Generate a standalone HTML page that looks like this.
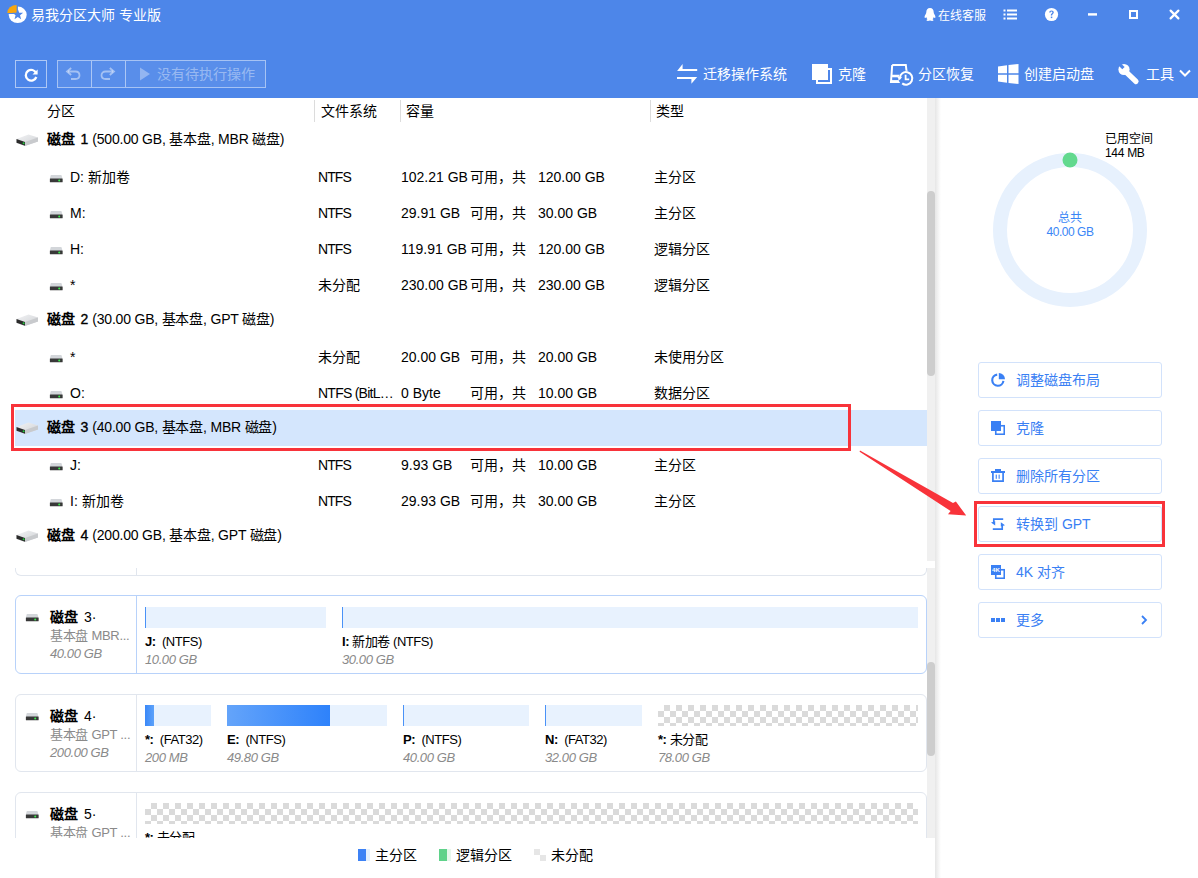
<!DOCTYPE html>
<html lang="zh-CN"><head><meta charset="utf-8">
<style>
*{margin:0;padding:0;box-sizing:border-box}
html,body{width:1198px;height:878px;overflow:hidden;background:#fff;font-family:"Liberation Sans",sans-serif;color:#000}
.a{position:absolute;white-space:nowrap}
.b{font-weight:bold}
.i{font-style:italic}
</style></head><body>
<div class="a" style="left:0;top:0;width:1198px;height:98px;background:#4d86e9"></div>

<svg class="a" style="left:0;top:0" width="30" height="30" viewBox="0 0 30 30">
<ellipse cx="17.7" cy="14.8" rx="9" ry="8.3" fill="#fff"/>
<rect x="8" y="5" width="9.9" height="9" fill="#4d86e9"/>
<path d="M16.6,12.9 L7.3,12.9 A9.3,7.9 0 0 1 16.6,5 Z" fill="#f9a70f"/>
<polygon points="17.80,9.00 19.18,12.70 23.13,12.87 20.03,15.33 21.09,19.13 17.80,16.95 14.51,19.13 15.57,15.33 12.47,12.87 16.42,12.70" fill="#4d86e9"/>
</svg>
<div class="a" style="left:31px;top:6px;font-size:14px;line-height:18px;color:#fff;">易我分区大师 专业版</div>
<svg class="a" style="left:923px;top:7px" width="14" height="15" viewBox="0 0 14 15">
<path d="M7,1 C4.5,1 3.3,3 3.3,5.2 C3.3,6 3.1,6.6 2.5,7.6 C1.6,9 1.2,10.6 2,11 C2.4,11.2 2.8,10.6 3.2,10 C3.4,11 3.9,11.8 4.5,12.3 C3.6,12.7 3.3,13.2 3.6,13.6 C4,14.1 6,14 7,13.5 C8,14 10,14.1 10.4,13.6 C10.7,13.2 10.4,12.7 9.5,12.3 C10.1,11.8 10.6,11 10.8,10 C11.2,10.6 11.6,11.2 12,11 C12.8,10.6 12.4,9 11.5,7.6 C10.9,6.6 10.7,6 10.7,5.2 C10.7,3 9.5,1 7,1 Z" fill="#fff"/>
</svg>
<div class="a" style="left:938px;top:8px;font-size:12px;line-height:16px;color:#fff;">在线客服</div>
<svg class="a" style="left:1003px;top:9px" width="15" height="11" viewBox="0 0 15 11">
<rect x="0.5" y="0.5" width="2" height="2" fill="#fff"/><rect x="4" y="0.5" width="10" height="2" fill="#fff"/>
<rect x="0.5" y="4.5" width="2" height="2" fill="#fff"/><rect x="4" y="4.5" width="10" height="2" fill="#fff"/>
<rect x="0.5" y="8.5" width="2" height="2" fill="#fff"/><rect x="4" y="8.5" width="10" height="2" fill="#fff"/>
</svg>
<svg class="a" style="left:1044px;top:7px" width="15" height="15" viewBox="0 0 15 15">
<circle cx="7.5" cy="7.5" r="6.6" fill="#fff"/>
<path d="M5.2,5.6 C5.2,4.2 6.2,3.4 7.5,3.4 C8.9,3.4 9.8,4.3 9.8,5.4 C9.8,6.6 8.4,6.9 8.2,8 L8.2,8.6 L6.8,8.6 L6.8,7.8 C7,6.4 8.4,6.2 8.4,5.4 C8.4,4.9 8,4.6 7.5,4.6 C6.9,4.6 6.6,5 6.6,5.6 Z" fill="#4d86e9"/>
<rect x="6.8" y="9.6" width="1.5" height="1.5" fill="#4d86e9"/>
</svg>
<svg class="a" style="left:1080px;top:5px" width="20" height="20" viewBox="0 0 20 20"><rect x="8" y="8.2" width="9" height="2.4" fill="#fff"/></svg>
<div class="a" style="left:1129px;top:10px;width:9px;height:9px;border:2px solid #fff"></div>
<svg class="a" style="left:1168px;top:8px" width="13" height="13" viewBox="0 0 13 13">
<path d="M2.6,2.6 L10.4,10.4 M10.4,2.6 L2.6,10.4" stroke="#fff" stroke-width="2.2" stroke-linecap="round"/>
</svg>
<div class="a" style="left:15px;top:60px;width:32px;height:28px;border:1px solid rgba(255,255,255,0.55)"></div>
<svg class="a" style="left:23px;top:67px" width="16" height="16" viewBox="0 0 16 16">
<path d="M13.2,6.2 A5.4,5.4 0 1 0 13.3,10" stroke="#fff" stroke-width="2.3" fill="none"/>
<path d="M9.5,7.6 H14.6 V2.6 Z" fill="#fff"/>
</svg>
<div class="a" style="left:57px;top:60px;width:209px;height:28px;border:1px solid rgba(255,255,255,0.5)"></div>
<div class="a" style="left:58px;top:61px;width:207px;height:26px;background:rgba(255,255,255,0.07)"></div>
<div class="a" style="left:91px;top:61px;width:1px;height:26px;background:rgba(255,255,255,0.5)"></div>
<div class="a" style="left:125px;top:61px;width:1px;height:26px;background:rgba(255,255,255,0.5)"></div>
<svg class="a" style="left:65px;top:67px" width="17" height="14" viewBox="0 0 17 14">
<path d="M3,4.5 H10.5 C13,4.5 14.5,6.2 14.5,8.3 C14.5,10.4 13,12 10.5,12 H6" stroke="rgba(255,255,255,0.45)" stroke-width="1.8" fill="none"/>
<path d="M6.2,1 L2,4.5 L6.2,8" stroke="rgba(255,255,255,0.45)" stroke-width="1.8" fill="none"/>
</svg>
<svg class="a" style="left:99px;top:67px" width="17" height="14" viewBox="0 0 17 14">
<path d="M14,4.5 H6.5 C4,4.5 2.5,6.2 2.5,8.3 C2.5,10.4 4,12 6.5,12 H11" stroke="rgba(255,255,255,0.45)" stroke-width="1.8" fill="none"/>
<path d="M10.8,1 L15,4.5 L10.8,8" stroke="rgba(255,255,255,0.45)" stroke-width="1.8" fill="none"/>
</svg>
<svg class="a" style="left:139px;top:67px" width="12" height="14" viewBox="0 0 12 14">
<polygon points="1,0.5 11,7 1,13.5" fill="rgba(255,255,255,0.35)"/></svg>
<div class="a" style="left:157px;top:65px;font-size:14px;line-height:18px;color:rgba(255,255,255,0.4);">没有待执行操作</div>
<svg class="a" style="left:672px;top:58px" width="30" height="30" viewBox="0 0 30 30">
<polygon points="5.1,13 10.6,6 10.6,11 25.2,11 25.2,13" fill="#fff"/>
<polygon points="5,19 25.2,19 19.4,25.8 19.4,21 5,21" fill="#fff"/>
</svg>
<div class="a" style="left:703px;top:65px;font-size:14px;line-height:18px;color:#fff;">迁移操作系统</div>
<svg class="a" style="left:806px;top:58px" width="30" height="30" viewBox="0 0 30 30">
<rect x="11" y="11" width="14" height="14" stroke="#fff" stroke-width="2" fill="none"/>
<rect x="6" y="6" width="16" height="16" fill="#fff"/>
</svg>
<div class="a" style="left:838px;top:65px;font-size:14px;line-height:18px;color:#fff;">克隆</div>
<svg class="a" style="left:884px;top:58px" width="32" height="32" viewBox="0 0 32 32">
<path d="M8.2,7 H21.8 L23,17 M8.2,7 L7,24 H16 M7,17.8 H16" stroke="#fff" stroke-width="2" fill="none"/>
<rect x="7" y="18" width="8" height="6" fill="#fff"/>
<rect x="8.2" y="19.3" width="5.8" height="2.8" fill="#4d86e9"/>
<circle cx="22" cy="20.4" r="7.6" fill="#4d86e9"/>
<path d="M15.7,20.4 A6.3,6.3 0 1 1 18.2,25.4" stroke="#fff" stroke-width="2" fill="none"/>
<polygon points="13.3,18.8 18.2,18.8 15.7,22.2" fill="#fff"/>
<path d="M21.6,16.8 V21.3 H25.2" stroke="#fff" stroke-width="1.8" fill="none"/>
</svg>
<div class="a" style="left:918px;top:65px;font-size:14px;line-height:18px;color:#fff;">分区恢复</div>
<svg class="a" style="left:998px;top:64px" width="21" height="20" viewBox="0 0 21 20">
<polygon points="0,2.5 9,1.2 9,9.2 0,9.2" fill="#fff"/><polygon points="10.5,1 20.5,0 20.5,9.2 10.5,9.2" fill="#fff"/>
<polygon points="0,10.8 9,10.8 9,18.8 0,17.5" fill="#fff"/><polygon points="10.5,10.8 20.5,10.8 20.5,20 10.5,19" fill="#fff"/>
</svg>
<div class="a" style="left:1024px;top:65px;font-size:14px;line-height:18px;color:#fff;">创建启动盘</div>
<svg class="a" style="left:1116px;top:61px" width="26" height="26" viewBox="0 0 26 26">
<path d="M9,10 L20,20.5" stroke="#fff" stroke-width="5.2" stroke-linecap="round"/>
<circle cx="8" cy="8.5" r="5.6" fill="#fff"/>
<path d="M2.2,4.2 L6.3,8.3 L8.6,6 L4.5,1.9 Z" fill="#4d86e9"/>
</svg>
<div class="a" style="left:1146px;top:65px;font-size:14px;line-height:18px;color:#fff;">工具</div>
<svg class="a" style="left:1179px;top:69px" width="12" height="9" viewBox="0 0 12 9">
<path d="M1,1.5 L6,6.5 L11,1.5" stroke="#fff" stroke-width="2" fill="none"/></svg>
<div class="a" style="left:47px;top:102px;font-size:14px;line-height:18px;color:#000;">分区</div>
<div class="a" style="left:321px;top:102px;font-size:14px;line-height:18px;color:#000;">文件系统</div>
<div class="a" style="left:406px;top:102px;font-size:14px;line-height:18px;color:#000;">容量</div>
<div class="a" style="left:656px;top:102px;font-size:14px;line-height:18px;color:#000;">类型</div>
<div class="a" style="left:314px;top:100px;width:1px;height:22px;background:#dcdcdc"></div>
<div class="a" style="left:400px;top:100px;width:1px;height:22px;background:#dcdcdc"></div>
<div class="a" style="left:650px;top:100px;width:1px;height:22px;background:#dcdcdc"></div>
<div class="a" style="left:15px;top:410px;width:912px;height:36px;background:#d4e6fd"></div>
<svg class="a" style="left:16px;top:134px" width="24" height="14" viewBox="0 0 24 14">
<defs><linearGradient id="bd1" x1="0" y1="0" x2="1" y2="1"><stop offset="0" stop-color="#f2f3f5"/><stop offset="1" stop-color="#cfd1d4"/></linearGradient></defs>
<polygon points="0.5,5 12.5,0.5 22,3.5 22,7.5 8.5,12 0.5,9" fill="url(#bd1)"/>
<polygon points="0.5,5 9,8 9,11.8 0.5,8.8" fill="#2b2b2b"/>
<polygon points="9,8 22,3.5 22,7.5 9,12" fill="#c8cacd"/>
<circle cx="7.6" cy="9.2" r="1" fill="#22c93a"/>
</svg>
<div class="a" style="left:47px;top:130px;font-size:14px;line-height:18px"><span style="font-weight:900">磁盘</span><span style="margin-left:5.5px;-webkit-text-stroke:0.35px">1</span><span style="margin-left:4px;letter-spacing:-0.2px">(500.00 GB, 基本盘, MBR 磁盘)</span></div>
<svg class="a" style="left:49px;top:174px" width="14" height="9" viewBox="0 0 14 9">
<path d="M1.8,1 H12.4 L13.5,4.6 V8 H0.9 V4.6 Z" fill="#d3d6da"/>
<rect x="0.9" y="4.6" width="12.7" height="3.6" rx="0.5" fill="#383838"/>
<circle cx="10.2" cy="6.4" r="1" fill="#3cf04e"/>
</svg>
<div class="a" style="left:70px;top:168px;font-size:14px;line-height:18px;color:#000;">D: 新加卷</div>
<div class="a" style="left:318px;top:168px;font-size:14px;line-height:18px;color:#000;letter-spacing:-0.9px">NTFS</div>
<div class="a" style="left:401px;top:168px;font-size:14px;line-height:18px;color:#000;">102.21 GB</div>
<div class="a" style="left:470px;top:168px;font-size:14px;line-height:18px;color:#000;">可用，共</div>
<div class="a" style="left:538px;top:168px;font-size:14px;line-height:18px;color:#000;">120.00 GB</div>
<div class="a" style="left:654px;top:168px;font-size:14px;line-height:18px;color:#000;">主分区</div>
<svg class="a" style="left:49px;top:210px" width="14" height="9" viewBox="0 0 14 9">
<path d="M1.8,1 H12.4 L13.5,4.6 V8 H0.9 V4.6 Z" fill="#d3d6da"/>
<rect x="0.9" y="4.6" width="12.7" height="3.6" rx="0.5" fill="#383838"/>
<circle cx="10.2" cy="6.4" r="1" fill="#3cf04e"/>
</svg>
<div class="a" style="left:70px;top:204px;font-size:14px;line-height:18px;color:#000;">M:</div>
<div class="a" style="left:318px;top:204px;font-size:14px;line-height:18px;color:#000;letter-spacing:-0.9px">NTFS</div>
<div class="a" style="left:401px;top:204px;font-size:14px;line-height:18px;color:#000;">29.91 GB</div>
<div class="a" style="left:470px;top:204px;font-size:14px;line-height:18px;color:#000;">可用，共</div>
<div class="a" style="left:538px;top:204px;font-size:14px;line-height:18px;color:#000;">30.00 GB</div>
<div class="a" style="left:654px;top:204px;font-size:14px;line-height:18px;color:#000;">主分区</div>
<svg class="a" style="left:49px;top:246px" width="14" height="9" viewBox="0 0 14 9">
<path d="M1.8,1 H12.4 L13.5,4.6 V8 H0.9 V4.6 Z" fill="#d3d6da"/>
<rect x="0.9" y="4.6" width="12.7" height="3.6" rx="0.5" fill="#383838"/>
<circle cx="10.2" cy="6.4" r="1" fill="#3cf04e"/>
</svg>
<div class="a" style="left:70px;top:240px;font-size:14px;line-height:18px;color:#000;">H:</div>
<div class="a" style="left:318px;top:240px;font-size:14px;line-height:18px;color:#000;letter-spacing:-0.9px">NTFS</div>
<div class="a" style="left:401px;top:240px;font-size:14px;line-height:18px;color:#000;">119.91 GB</div>
<div class="a" style="left:470px;top:240px;font-size:14px;line-height:18px;color:#000;">可用，共</div>
<div class="a" style="left:538px;top:240px;font-size:14px;line-height:18px;color:#000;">120.00 GB</div>
<div class="a" style="left:654px;top:240px;font-size:14px;line-height:18px;color:#000;">逻辑分区</div>
<svg class="a" style="left:49px;top:282px" width="14" height="9" viewBox="0 0 14 9">
<path d="M1.8,1 H12.4 L13.5,4.6 V8 H0.9 V4.6 Z" fill="#d3d6da"/>
<rect x="0.9" y="4.6" width="12.7" height="3.6" rx="0.5" fill="#383838"/>
<circle cx="10.2" cy="6.4" r="1" fill="#3cf04e"/>
</svg>
<div class="a" style="left:70px;top:276px;font-size:14px;line-height:18px;color:#000;">*</div>
<div class="a" style="left:318px;top:276px;font-size:14px;line-height:18px;color:#000;">未分配</div>
<div class="a" style="left:401px;top:276px;font-size:14px;line-height:18px;color:#000;">230.00 GB</div>
<div class="a" style="left:470px;top:276px;font-size:14px;line-height:18px;color:#000;">可用，共</div>
<div class="a" style="left:538px;top:276px;font-size:14px;line-height:18px;color:#000;">230.00 GB</div>
<div class="a" style="left:654px;top:276px;font-size:14px;line-height:18px;color:#000;">逻辑分区</div>
<svg class="a" style="left:16px;top:314px" width="24" height="14" viewBox="0 0 24 14">
<defs><linearGradient id="bd2" x1="0" y1="0" x2="1" y2="1"><stop offset="0" stop-color="#f2f3f5"/><stop offset="1" stop-color="#cfd1d4"/></linearGradient></defs>
<polygon points="0.5,5 12.5,0.5 22,3.5 22,7.5 8.5,12 0.5,9" fill="url(#bd2)"/>
<polygon points="0.5,5 9,8 9,11.8 0.5,8.8" fill="#2b2b2b"/>
<polygon points="9,8 22,3.5 22,7.5 9,12" fill="#c8cacd"/>
<circle cx="7.6" cy="9.2" r="1" fill="#22c93a"/>
</svg>
<div class="a" style="left:47px;top:310px;font-size:14px;line-height:18px"><span style="font-weight:900">磁盘</span><span style="margin-left:5.5px;-webkit-text-stroke:0.35px">2</span><span style="margin-left:4px;letter-spacing:-0.2px">(30.00 GB, 基本盘, GPT 磁盘)</span></div>
<svg class="a" style="left:49px;top:354px" width="14" height="9" viewBox="0 0 14 9">
<path d="M1.8,1 H12.4 L13.5,4.6 V8 H0.9 V4.6 Z" fill="#d3d6da"/>
<rect x="0.9" y="4.6" width="12.7" height="3.6" rx="0.5" fill="#383838"/>
<circle cx="10.2" cy="6.4" r="1" fill="#3cf04e"/>
</svg>
<div class="a" style="left:70px;top:348px;font-size:14px;line-height:18px;color:#000;">*</div>
<div class="a" style="left:318px;top:348px;font-size:14px;line-height:18px;color:#000;">未分配</div>
<div class="a" style="left:401px;top:348px;font-size:14px;line-height:18px;color:#000;">20.00 GB</div>
<div class="a" style="left:470px;top:348px;font-size:14px;line-height:18px;color:#000;">可用，共</div>
<div class="a" style="left:538px;top:348px;font-size:14px;line-height:18px;color:#000;">20.00 GB</div>
<div class="a" style="left:654px;top:348px;font-size:14px;line-height:18px;color:#000;">未使用分区</div>
<svg class="a" style="left:49px;top:390px" width="14" height="9" viewBox="0 0 14 9">
<path d="M1.8,1 H12.4 L13.5,4.6 V8 H0.9 V4.6 Z" fill="#d3d6da"/>
<rect x="0.9" y="4.6" width="12.7" height="3.6" rx="0.5" fill="#383838"/>
<circle cx="10.2" cy="6.4" r="1" fill="#3cf04e"/>
</svg>
<div class="a" style="left:70px;top:384px;font-size:14px;line-height:18px;color:#000;">O:</div>
<div class="a" style="left:318px;top:384px;font-size:14px;line-height:18px;color:#000;letter-spacing:-0.75px">NTFS (BitL…</div>
<div class="a" style="left:401px;top:384px;font-size:14px;line-height:18px;color:#000;">0 Byte</div>
<div class="a" style="left:470px;top:384px;font-size:14px;line-height:18px;color:#000;">可用，共</div>
<div class="a" style="left:538px;top:384px;font-size:14px;line-height:18px;color:#000;">10.00 GB</div>
<div class="a" style="left:654px;top:384px;font-size:14px;line-height:18px;color:#000;">数据分区</div>
<svg class="a" style="left:16px;top:422px" width="24" height="14" viewBox="0 0 24 14">
<defs><linearGradient id="bd3" x1="0" y1="0" x2="1" y2="1"><stop offset="0" stop-color="#f2f3f5"/><stop offset="1" stop-color="#cfd1d4"/></linearGradient></defs>
<polygon points="0.5,5 12.5,0.5 22,3.5 22,7.5 8.5,12 0.5,9" fill="url(#bd3)"/>
<polygon points="0.5,5 9,8 9,11.8 0.5,8.8" fill="#2b2b2b"/>
<polygon points="9,8 22,3.5 22,7.5 9,12" fill="#c8cacd"/>
<circle cx="7.6" cy="9.2" r="1" fill="#22c93a"/>
</svg>
<div class="a" style="left:47px;top:418px;font-size:14px;line-height:18px"><span style="font-weight:900">磁盘</span><span style="margin-left:5.5px;-webkit-text-stroke:0.35px">3</span><span style="margin-left:4px;letter-spacing:-0.2px">(40.00 GB, 基本盘, MBR 磁盘)</span></div>
<svg class="a" style="left:49px;top:462px" width="14" height="9" viewBox="0 0 14 9">
<path d="M1.8,1 H12.4 L13.5,4.6 V8 H0.9 V4.6 Z" fill="#d3d6da"/>
<rect x="0.9" y="4.6" width="12.7" height="3.6" rx="0.5" fill="#383838"/>
<circle cx="10.2" cy="6.4" r="1" fill="#3cf04e"/>
</svg>
<div class="a" style="left:70px;top:456px;font-size:14px;line-height:18px;color:#000;">J:</div>
<div class="a" style="left:318px;top:456px;font-size:14px;line-height:18px;color:#000;letter-spacing:-0.9px">NTFS</div>
<div class="a" style="left:401px;top:456px;font-size:14px;line-height:18px;color:#000;">9.93 GB</div>
<div class="a" style="left:470px;top:456px;font-size:14px;line-height:18px;color:#000;">可用，共</div>
<div class="a" style="left:538px;top:456px;font-size:14px;line-height:18px;color:#000;">10.00 GB</div>
<div class="a" style="left:654px;top:456px;font-size:14px;line-height:18px;color:#000;">主分区</div>
<svg class="a" style="left:49px;top:498px" width="14" height="9" viewBox="0 0 14 9">
<path d="M1.8,1 H12.4 L13.5,4.6 V8 H0.9 V4.6 Z" fill="#d3d6da"/>
<rect x="0.9" y="4.6" width="12.7" height="3.6" rx="0.5" fill="#383838"/>
<circle cx="10.2" cy="6.4" r="1" fill="#3cf04e"/>
</svg>
<div class="a" style="left:70px;top:492px;font-size:14px;line-height:18px;color:#000;">I: 新加卷</div>
<div class="a" style="left:318px;top:492px;font-size:14px;line-height:18px;color:#000;letter-spacing:-0.9px">NTFS</div>
<div class="a" style="left:401px;top:492px;font-size:14px;line-height:18px;color:#000;">29.93 GB</div>
<div class="a" style="left:470px;top:492px;font-size:14px;line-height:18px;color:#000;">可用，共</div>
<div class="a" style="left:538px;top:492px;font-size:14px;line-height:18px;color:#000;">30.00 GB</div>
<div class="a" style="left:654px;top:492px;font-size:14px;line-height:18px;color:#000;">主分区</div>
<svg class="a" style="left:16px;top:530px" width="24" height="14" viewBox="0 0 24 14">
<defs><linearGradient id="bd4" x1="0" y1="0" x2="1" y2="1"><stop offset="0" stop-color="#f2f3f5"/><stop offset="1" stop-color="#cfd1d4"/></linearGradient></defs>
<polygon points="0.5,5 12.5,0.5 22,3.5 22,7.5 8.5,12 0.5,9" fill="url(#bd4)"/>
<polygon points="0.5,5 9,8 9,11.8 0.5,8.8" fill="#2b2b2b"/>
<polygon points="9,8 22,3.5 22,7.5 9,12" fill="#c8cacd"/>
<circle cx="7.6" cy="9.2" r="1" fill="#22c93a"/>
</svg>
<div class="a" style="left:47px;top:526px;font-size:14px;line-height:18px"><span style="font-weight:900">磁盘</span><span style="margin-left:5.5px;-webkit-text-stroke:0.35px">4</span><span style="margin-left:4px;letter-spacing:-0.2px">(200.00 GB, 基本盘, GPT 磁盘)</span></div>
<div class="a" style="left:927px;top:98px;width:8px;height:463px;background:#f0f0f0"></div>
<div class="a" style="left:927px;top:191px;width:8px;height:185px;background:#cdcdcd;border-radius:4px"></div>
<div class="a" style="left:927px;top:568px;width:8px;height:270px;background:#f0f0f0"></div>
<div class="a" style="left:927px;top:662px;width:8px;height:94px;background:#cdcdcd;border-radius:4px"></div>
<div class="a" style="left:935px;top:98px;width:6px;height:780px;background:linear-gradient(to right,#e6e6e6,#fff)"></div>
<div class="a" style="left:15px;top:548px;width:912px;height:28px;border:1px solid #e1e6ee;border-top:none;border-radius:0 0 6px 6px"></div>
<div class="a" style="left:136px;top:560px;width:1px;height:15px;background:#e1e6ee"></div>
<div class="a" style="left:0;top:548px;width:927px;height:20px;background:#fff"></div>
<div class="a" style="left:15px;top:595px;width:912px;height:79px;border:1px solid #b8d2fa;border-radius:6px"></div>
<div class="a" style="left:136px;top:596px;width:1px;height:77px;background:#b8d2fa"></div>
<svg class="a" style="left:25px;top:613px" width="14" height="9" viewBox="0 0 14 9">
<path d="M1.8,1 H12.4 L13.5,4.6 V8 H0.9 V4.6 Z" fill="#d3d6da"/>
<rect x="0.9" y="4.6" width="12.7" height="3.6" rx="0.5" fill="#383838"/>
<circle cx="10.2" cy="6.4" r="1" fill="#3cf04e"/>
</svg>
<div class="a" style="left:50px;top:608px;font-size:14px;line-height:18px"><span style="font-weight:900">磁盘</span><span style="margin-left:6px">3·</span></div>
<div class="a" style="left:50px;top:627px;font-size:13px;line-height:17px;color:#8a8a8a;letter-spacing:-0.3px">基本盘 MBR...</div>
<div class="a" style="left:50px;top:645px;font-size:13px;line-height:17px;color:#8a8a8a;font-style:italic;letter-spacing:-0.4px">40.00 GB</div>
<div class="a" style="left:145px;top:607px;width:181px;height:21px;background:#e8f2fe"></div>
<div class="a" style="left:145px;top:607px;width:1px;height:21px;background:#4a92f7"></div>
<div class="a" style="left:342px;top:607px;width:576px;height:21px;background:#e8f2fe"></div>
<div class="a" style="left:342px;top:607px;width:1px;height:21px;background:#4a92f7"></div>
<div class="a" style="left:145px;top:633px;font-size:13px;line-height:17px;letter-spacing:-0.45px"><span class="b">J:</span>&nbsp; (NTFS)</div>
<div class="a" style="left:145px;top:651px;font-size:13px;line-height:17px;color:#8a8a8a;font-style:italic;letter-spacing:-0.4px">10.00 GB</div>
<div class="a" style="left:342px;top:633px;font-size:13px;line-height:17px;letter-spacing:-0.45px"><span class="b">I:</span> 新加卷 (NTFS)</div>
<div class="a" style="left:342px;top:651px;font-size:13px;line-height:17px;color:#8a8a8a;font-style:italic;letter-spacing:-0.4px">30.00 GB</div>
<div class="a" style="left:15px;top:694px;width:912px;height:78px;border:1px solid #e1e6ee;border-radius:6px"></div>
<div class="a" style="left:136px;top:695px;width:1px;height:76px;background:#e1e6ee"></div>
<svg class="a" style="left:25px;top:712px" width="14" height="9" viewBox="0 0 14 9">
<path d="M1.8,1 H12.4 L13.5,4.6 V8 H0.9 V4.6 Z" fill="#d3d6da"/>
<rect x="0.9" y="4.6" width="12.7" height="3.6" rx="0.5" fill="#383838"/>
<circle cx="10.2" cy="6.4" r="1" fill="#3cf04e"/>
</svg>
<div class="a" style="left:50px;top:707px;font-size:14px;line-height:18px"><span style="font-weight:900">磁盘</span><span style="margin-left:6px">4·</span></div>
<div class="a" style="left:50px;top:726px;font-size:13px;line-height:17px;color:#8a8a8a;letter-spacing:-0.3px">基本盘 GPT ...</div>
<div class="a" style="left:50px;top:744px;font-size:13px;line-height:17px;color:#8a8a8a;font-style:italic;letter-spacing:-0.4px">200.00 GB</div>
<div class="a" style="left:145px;top:705px;width:66px;height:21px;background:#e8f2fe"></div>
<div class="a" style="left:145px;top:705px;width:9px;height:21px;background:linear-gradient(to right,#3a88f8,#5da2fa)"></div>
<div class="a" style="left:227px;top:705px;width:160px;height:21px;background:#e8f2fe"></div>
<div class="a" style="left:227px;top:705px;width:103px;height:21px;background:linear-gradient(to right,#64a4fa,#2e82fb)"></div>
<div class="a" style="left:403px;top:705px;width:126px;height:21px;background:#e8f2fe"></div>
<div class="a" style="left:403px;top:705px;width:1px;height:21px;background:#4a92f7"></div>
<div class="a" style="left:545px;top:705px;width:97px;height:21px;background:#e8f2fe"></div>
<div class="a" style="left:545px;top:705px;width:1px;height:21px;background:#4a92f7"></div>
<div class="a" style="left:658px;top:705px;width:260px;height:21px;background-color:#fff;background-image:linear-gradient(45deg,#dadada 25%,transparent 25%,transparent 75%,#dadada 75%),linear-gradient(45deg,#dadada 25%,transparent 25%,transparent 75%,#dadada 75%);background-size:12px 12px;background-position:0 0,6px 6px"></div>
<div class="a" style="left:145px;top:731px;font-size:13px;line-height:17px;letter-spacing:-0.45px"><span class="b">*:</span>&nbsp; (FAT32)</div>
<div class="a" style="left:145px;top:749px;font-size:13px;line-height:17px;color:#8a8a8a;font-style:italic;letter-spacing:-0.4px">200 MB</div>
<div class="a" style="left:227px;top:731px;font-size:13px;line-height:17px;letter-spacing:-0.45px"><span class="b">E:</span>&nbsp; (NTFS)</div>
<div class="a" style="left:227px;top:749px;font-size:13px;line-height:17px;color:#8a8a8a;font-style:italic;letter-spacing:-0.4px">49.80 GB</div>
<div class="a" style="left:403px;top:731px;font-size:13px;line-height:17px;letter-spacing:-0.45px"><span class="b">P:</span>&nbsp; (NTFS)</div>
<div class="a" style="left:403px;top:749px;font-size:13px;line-height:17px;color:#8a8a8a;font-style:italic;letter-spacing:-0.4px">40.00 GB</div>
<div class="a" style="left:545px;top:731px;font-size:13px;line-height:17px;letter-spacing:-0.45px"><span class="b">N:</span>&nbsp; (FAT32)</div>
<div class="a" style="left:545px;top:749px;font-size:13px;line-height:17px;color:#8a8a8a;font-style:italic;letter-spacing:-0.4px">32.00 GB</div>
<div class="a" style="left:658px;top:731px;font-size:13px;line-height:17px;letter-spacing:-0.45px"><span class="b">*:</span> 未分配</div>
<div class="a" style="left:658px;top:749px;font-size:13px;line-height:17px;color:#8a8a8a;font-style:italic;letter-spacing:-0.4px">78.00 GB</div>
<div class="a" style="left:0;top:0;width:927px;height:838px;overflow:hidden">
<div class="a" style="left:15px;top:792px;width:912px;height:90px;border:1px solid #e1e6ee;border-radius:6px"></div>
<div class="a" style="left:136px;top:793px;width:1px;height:88px;background:#e1e6ee"></div>
<svg class="a" style="left:25px;top:810px" width="14" height="9" viewBox="0 0 14 9">
<path d="M1.8,1 H12.4 L13.5,4.6 V8 H0.9 V4.6 Z" fill="#d3d6da"/>
<rect x="0.9" y="4.6" width="12.7" height="3.6" rx="0.5" fill="#383838"/>
<circle cx="10.2" cy="6.4" r="1" fill="#3cf04e"/>
</svg>
<div class="a" style="left:50px;top:805px;font-size:14px;line-height:18px"><span style="font-weight:900">磁盘</span><span style="margin-left:6px">5·</span></div>
<div class="a" style="left:50px;top:824px;font-size:13px;line-height:17px;color:#8a8a8a;letter-spacing:-0.3px">基本盘 GPT ...</div>
<div class="a" style="left:50px;top:842px;font-size:13px;line-height:17px;color:#8a8a8a;font-style:italic;letter-spacing:-0.4px"></div>
<div class="a" style="left:145px;top:803px;width:773px;height:21px;background-color:#fff;background-image:linear-gradient(45deg,#dadada 25%,transparent 25%,transparent 75%,#dadada 75%),linear-gradient(45deg,#dadada 25%,transparent 25%,transparent 75%,#dadada 75%);background-size:12px 12px;background-position:0 0,6px 6px"></div>
<div class="a" style="left:145px;top:829px;font-size:13px;line-height:17px;letter-spacing:-0.45px"><span class="b">*:</span> 未分配</div>
<div class="a" style="left:145px;top:847px;font-size:13px;line-height:17px;color:#8a8a8a;font-style:italic;letter-spacing:-0.4px"></div>
</div>
<div class="a" style="left:358px;top:849px;width:8px;height:12px;background:#3d82f5"></div>
<div class="a" style="left:366px;top:849px;width:4px;height:12px;background:#e5f0fd"></div>
<div class="a" style="left:375px;top:846px;font-size:14px;line-height:18px;color:#000;">主分区</div>
<div class="a" style="left:439px;top:849px;width:8px;height:12px;background:#5fd28a"></div>
<div class="a" style="left:447px;top:849px;width:4px;height:12px;background:#e6f7ec"></div>
<div class="a" style="left:456px;top:846px;font-size:14px;line-height:18px;color:#000;">逻辑分区</div>
<div class="a" style="left:534px;top:849px;width:6px;height:6px;background:#e6e6e6"></div>
<div class="a" style="left:540px;top:855px;width:6px;height:6px;background:#e6e6e6"></div>
<div class="a" style="left:551px;top:846px;font-size:14px;line-height:18px;color:#000;">未分配</div>
<svg class="a" style="left:985px;top:145px" width="170" height="170" viewBox="0 0 170 170">
<circle cx="85" cy="85" r="70" stroke="#e7f1fd" stroke-width="14" fill="none"/>
<circle cx="85" cy="15" r="7.5" fill="#62d98e"/>
</svg>
<div class="a" style="left:1105px;top:131px;font-size:12px;line-height:16px;color:#000;">已用空间</div>
<div class="a" style="left:1105px;top:145px;font-size:12px;line-height:16px;color:#000;letter-spacing:-0.3px">144 MB</div>
<div class="a" style="left:1020px;top:210px;width:100px;text-align:center;font-size:12px;line-height:16px;color:#3a86f6">总共</div>
<div class="a" style="left:1020px;top:224px;width:100px;text-align:center;font-size:12px;line-height:16px;color:#3a86f6;letter-spacing:-0.45px">40.00 GB</div>
<div class="a" style="left:978px;top:362px;width:184px;height:36px;border:1px solid #d2e2fb;border-radius:3px;background:#fff"></div>
<svg class="a" style="left:991px;top:373px" width="14" height="14" viewBox="0 0 14 14"><path d="M6.2,1.6 A5.6,5.6 0 1 0 12.4,7.8" stroke="#3a80f4" stroke-width="2.1" fill="none"/><path d="M7.8,0 A6.4,6.4 0 0 1 14,6.2 H7.8 Z" fill="#3a80f4"/></svg>
<div class="a" style="left:1016px;top:371px;font-size:14px;line-height:18px;color:#3a80f4;">调整磁盘布局</div>
<div class="a" style="left:978px;top:410px;width:184px;height:36px;border:1px solid #d2e2fb;border-radius:3px;background:#fff"></div>
<svg class="a" style="left:991px;top:421px" width="14" height="14" viewBox="0 0 14 14"><rect x="4.75" y="4.75" width="8.5" height="8.5" stroke="#3a80f4" stroke-width="1.6" fill="#fff"/><rect x="0" y="0" width="10" height="10" fill="#3a80f4"/></svg>
<div class="a" style="left:1016px;top:419px;font-size:14px;line-height:18px;color:#3a80f4;">克隆</div>
<div class="a" style="left:978px;top:458px;width:184px;height:36px;border:1px solid #d2e2fb;border-radius:3px;background:#fff"></div>
<svg class="a" style="left:991px;top:469px" width="14" height="14" viewBox="0 0 14 14"><rect x="4" y="0" width="6" height="2" fill="#3a80f4"/><rect x="0" y="2" width="14" height="2" fill="#3a80f4"/><path d="M1.9,4 V12.2 H12.1 V4" stroke="#3a80f4" stroke-width="1.7" fill="none"/><rect x="4.7" y="5.6" width="1.1" height="4.2" fill="#3a80f4"/><rect x="7.6" y="5.6" width="1.1" height="4.2" fill="#3a80f4"/></svg>
<div class="a" style="left:1016px;top:467px;font-size:14px;line-height:18px;color:#3a80f4;">删除所有分区</div>
<div class="a" style="left:978px;top:506px;width:184px;height:36px;border:1px solid #d2e2fb;border-radius:3px;background:#fff"></div>
<svg class="a" style="left:991px;top:517px" width="14" height="14" viewBox="0 0 14 14"><path d="M12.2,2.2 H2.8 V6.5" stroke="#3a80f4" stroke-width="1.7" fill="none"/><polygon points="0,5.5 4.2,4.2 4.2,8.6" fill="#3a80f4"/><path d="M1.8,12.2 H11.2 V7.5" stroke="#3a80f4" stroke-width="1.7" fill="none"/><polygon points="14,8.2 9.8,5.2 9.8,9.6" fill="#3a80f4"/></svg>
<div class="a" style="left:1016px;top:515px;font-size:14px;line-height:18px;color:#3a80f4;">转换到 GPT</div>
<div class="a" style="left:978px;top:554px;width:184px;height:36px;border:1px solid #d2e2fb;border-radius:3px;background:#fff"></div>
<svg class="a" style="left:991px;top:565px" width="14" height="14" viewBox="0 0 14 14"><rect x="4.75" y="4.75" width="8.5" height="8.5" stroke="#3a80f4" stroke-width="1.6" fill="#fff"/><rect x="0" y="0" width="10" height="10" fill="#3a80f4"/><text x="5" y="7.3" font-size="6.2" font-family="Liberation Sans" font-weight="bold" fill="#fff" text-anchor="middle">4K</text></svg>
<div class="a" style="left:1016px;top:563px;font-size:14px;line-height:18px;color:#3a80f4;">4K 对齐</div>
<div class="a" style="left:978px;top:602px;width:184px;height:36px;border:1px solid #d2e2fb;border-radius:3px;background:#fff"></div>
<svg class="a" style="left:991px;top:613px" width="14" height="14" viewBox="0 0 14 14"><rect x="0" y="5" width="4" height="4" fill="#3a80f4"/><rect x="5" y="5" width="4" height="4" fill="#3a80f4"/><rect x="10" y="5" width="4" height="4" fill="#3a80f4"/></svg>
<div class="a" style="left:1016px;top:611px;font-size:14px;line-height:18px;color:#3a80f4;">更多</div>
<svg class="a" style="left:1140px;top:614px" width="8" height="12" viewBox="0 0 8 12">
<path d="M2,2 L6,6 L2,10" stroke="#3a80f4" stroke-width="1.8" fill="none"/></svg>
<div class="a" style="left:11px;top:404px;width:840px;height:47px;border:3px solid #f8333a"></div>
<div class="a" style="left:974px;top:501px;width:191px;height:46px;border:3px solid #f8333a"></div>
<svg class="a" style="left:0;top:0" width="1198" height="878" viewBox="0 0 1198 878">
<polygon points="860,450.6 953,503 955.9,501.5 966.2,515.6 948,514.3 950.6,511 859.6,451.8" fill="#f8333a"/>
</svg>
</body></html>
